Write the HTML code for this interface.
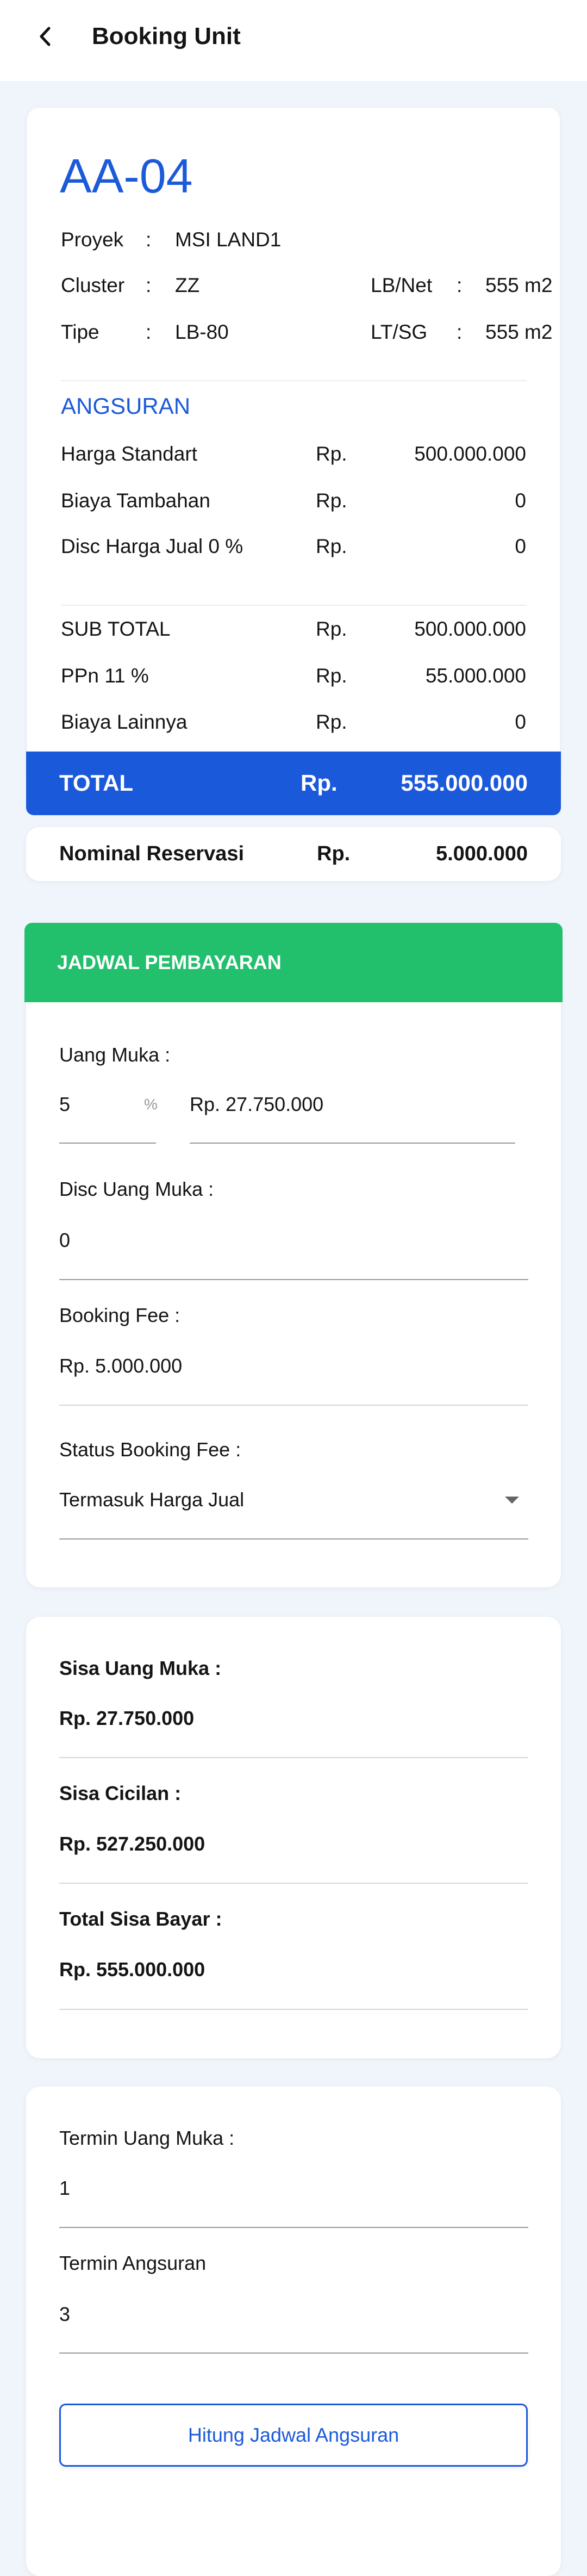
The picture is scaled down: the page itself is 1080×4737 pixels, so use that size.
<!DOCTYPE html>
<html><head><meta charset="utf-8">
<style>
*{margin:0;padding:0;box-sizing:border-box}
body{width:1080px;height:4595px;background:#eff5fb;font-family:"Liberation Sans",Arial,sans-serif;color:#141414;position:relative;overflow:hidden}
.a{position:absolute;white-space:nowrap}
.t{position:absolute;white-space:nowrap;height:60px;line-height:60px;font-size:37px}
.r{text-align:right}
.b{font-weight:bold}
.card{position:absolute;background:#fff;border-radius:26px;box-shadow:0 2px 10px rgba(0,0,0,0.05)}
.ln{position:absolute;height:2px;background:#9a9a9a}
.ll{position:absolute;height:2px;background:#d6d6d6}
</style></head><body>
<div class="a" style="left:0;top:0;width:1080px;height:149px;background:#fff"></div>
<svg class="a" style="left:70px;top:48px" width="28" height="38" viewBox="0 0 28 38"><path d="M20 4 L6 19 L20 34" fill="none" stroke="#111" stroke-width="5" stroke-linecap="round" stroke-linejoin="round"/></svg>
<div class="t b" style="left:169px;top:37px;font-size:44px">Booking Unit</div>

<div class="card" style="left:50px;top:198px;width:980px;height:1240px;border-radius:22px"></div>
<div class="t" style="left:110px;top:274px;height:100px;line-height:100px;font-size:88px;color:#1b5ad9">AA-04</div>
<div class="t" style="left:112px;top:411px">Proyek</div><div class="t" style="left:268px;top:411px">:</div><div class="t" style="left:322px;top:411px">MSI LAND1</div>
<div class="t" style="left:112px;top:495px">Cluster</div><div class="t" style="left:268px;top:495px">:</div><div class="t" style="left:322px;top:495px">ZZ</div>
<div class="t" style="left:682px;top:495px">LB/Net</div><div class="t" style="left:840px;top:495px">:</div><div class="t" style="left:893px;top:495px">555 m2</div>
<div class="t" style="left:112px;top:581px">Tipe</div><div class="t" style="left:268px;top:581px">:</div><div class="t" style="left:322px;top:581px">LB-80</div>
<div class="t" style="left:682px;top:581px">LT/SG</div><div class="t" style="left:840px;top:581px">:</div><div class="t" style="left:893px;top:581px">555 m2</div>
<div class="ll" style="left:112px;top:699px;width:857px;background:#ececec"></div>
<div class="t" style="left:112px;top:717px;font-size:42px;color:#1b5ad9">ANGSURAN</div>
<div class="t" style="left:112px;top:805px">Harga Standart</div><div class="t" style="left:581px;top:805px">Rp.</div><div class="t r" style="right:112px;top:805px">500.000.000</div>
<div class="t" style="left:112px;top:891px">Biaya Tambahan</div><div class="t" style="left:581px;top:891px">Rp.</div><div class="t r" style="right:112px;top:891px">0</div>
<div class="t" style="left:112px;top:975px">Disc Harga Jual 0 %</div><div class="t" style="left:581px;top:975px">Rp.</div><div class="t r" style="right:112px;top:975px">0</div>
<div class="ll" style="left:112px;top:1112px;width:857px;background:#ececec"></div>
<div class="t" style="left:112px;top:1127px">SUB TOTAL</div><div class="t" style="left:581px;top:1127px">Rp.</div><div class="t r" style="right:112px;top:1127px">500.000.000</div>
<div class="t" style="left:112px;top:1213px">PPn 11 %</div><div class="t" style="left:581px;top:1213px">Rp.</div><div class="t r" style="right:112px;top:1213px">55.000.000</div>
<div class="t" style="left:112px;top:1298px">Biaya Lainnya</div><div class="t" style="left:581px;top:1298px">Rp.</div><div class="t r" style="right:112px;top:1298px">0</div>
<div class="a" style="left:48px;top:1382px;width:984px;height:117px;background:#1b59db;border-radius:0 0 14px 14px"></div>
<div class="t b" style="left:109px;top:1410px;font-size:42px;color:#fff">TOTAL</div>
<div class="t b" style="left:553px;top:1410px;font-size:42px;color:#fff">Rp.</div>
<div class="t b r" style="right:109px;top:1410px;font-size:42px;color:#fff">555.000.000</div>

<div class="card" style="left:48px;top:1521px;width:984px;height:99px;border-radius:24px"></div>
<div class="t b" style="left:109px;top:1540px;font-size:38px">Nominal Reservasi</div>
<div class="t b" style="left:583px;top:1540px;font-size:38px">Rp.</div>
<div class="t b r" style="right:109px;top:1540px;font-size:38px">5.000.000</div>

<div class="card" style="left:48px;top:1697px;width:984px;height:1222px"></div>
<div class="a" style="left:45px;top:1697px;width:990px;height:146px;background:#22bf6c;border-radius:14px 14px 0 0"></div>
<div class="t b" style="left:105px;top:1740px;font-size:36px;color:#fff">JADWAL PEMBAYARAN</div>
<div class="t" style="left:109px;top:1910px;font-size:36px">Uang Muka :</div>
<div class="t" style="left:109px;top:2001px;font-size:36px">5</div>
<div class="t" style="left:265px;top:2001px;font-size:28px;color:#999">%</div>
<div class="t" style="left:349px;top:2001px;font-size:36px">Rp. 27.750.000</div>
<div class="ln" style="left:109px;top:2101px;width:178px"></div>
<div class="ln" style="left:349px;top:2101px;width:599px"></div>
<div class="t" style="left:109px;top:2157px;font-size:36px">Disc Uang Muka :</div>
<div class="t" style="left:109px;top:2251px;font-size:36px">0</div>
<div class="ln" style="left:109px;top:2352px;width:863px"></div>
<div class="t" style="left:109px;top:2389px;font-size:36px">Booking Fee :</div>
<div class="t" style="left:109px;top:2482px;font-size:36px">Rp. 5.000.000</div>
<div class="ll" style="left:109px;top:2583px;width:863px"></div>
<div class="t" style="left:109px;top:2636px;font-size:36px">Status Booking Fee :</div>
<div class="t" style="left:109px;top:2728px;font-size:36px">Termasuk Harga Jual</div>
<svg class="a" style="left:929px;top:2752px" width="26" height="13" viewBox="0 0 26 13"><path d="M0 0 L26 0 L13 13 Z" fill="#666"/></svg>
<div class="ln" style="left:109px;top:2829px;width:863px"></div>

<div class="card" style="left:48px;top:2973px;width:984px;height:812px"></div>
<div class="t b" style="left:109px;top:3038px;font-size:36px">Sisa Uang Muka :</div>
<div class="t b" style="left:109px;top:3130px;font-size:36px">Rp. 27.750.000</div>
<div class="ll" style="left:109px;top:3231px;width:863px"></div>
<div class="t b" style="left:109px;top:3268px;font-size:36px">Sisa Cicilan :</div>
<div class="t b" style="left:109px;top:3361px;font-size:36px">Rp. 527.250.000</div>
<div class="ll" style="left:109px;top:3462px;width:863px"></div>
<div class="t b" style="left:109px;top:3499px;font-size:36px">Total Sisa Bayar :</div>
<div class="t b" style="left:109px;top:3592px;font-size:36px">Rp. 555.000.000</div>
<div class="ll" style="left:109px;top:3694px;width:863px"></div>

<div class="card" style="left:48px;top:3837px;width:984px;height:900px"></div>
<div class="t" style="left:109px;top:3902px;font-size:36px">Termin Uang Muka :</div>
<div class="t" style="left:109px;top:3994px;font-size:36px">1</div>
<div class="ln" style="left:109px;top:4095px;width:863px"></div>
<div class="t" style="left:109px;top:4132px;font-size:36px">Termin Angsuran</div>
<div class="t" style="left:109px;top:4226px;font-size:36px">3</div>
<div class="ln" style="left:109px;top:4326px;width:863px"></div>
<div class="a" style="left:109px;top:4420px;width:862px;height:116px;border:3px solid #1b5ad9;border-radius:12px;box-shadow:0 3px 8px rgba(0,0,0,0.08)"></div>
<div class="t" style="left:109px;width:862px;text-align:center;top:4448px;font-size:36px;color:#1b5ad9">Hitung Jadwal Angsuran</div>
</body></html>
